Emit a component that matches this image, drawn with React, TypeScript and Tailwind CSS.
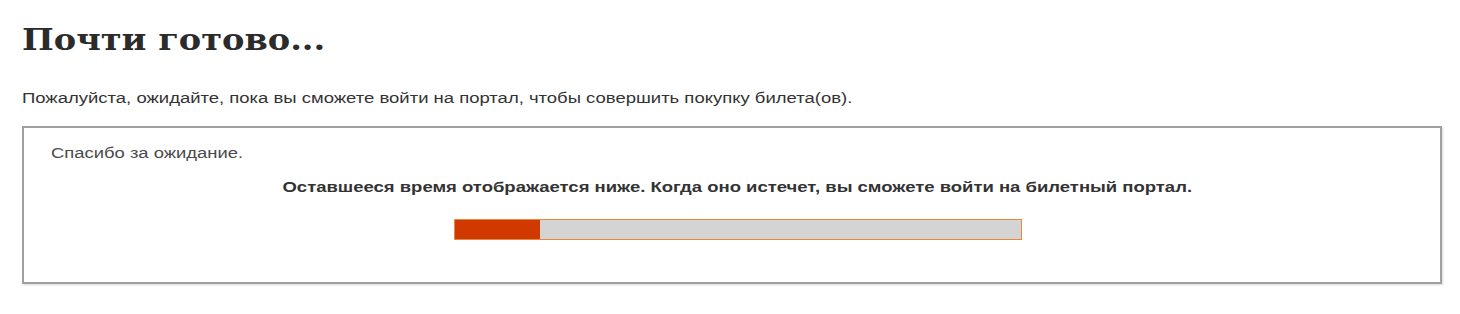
export default function App() {
  const progress = 15;
  return (
    <div className="w-[1460px] h-[314px] overflow-hidden bg-white pl-[22px] pr-[18px] pt-[18px] font-['Liberation_Sans',Arial,sans-serif] text-[#333]">
      <h1 className="font-['DejaVu_Serif',Georgia,serif] font-bold text-[30px] leading-[44px] text-[#2b2b2b] origin-left scale-x-[1.12]">
        Почти готово...
      </h1>
      <p className="mt-[27px] text-[14px] leading-[18px] text-[#333] origin-left scale-x-[1.32]">
        Пожалуйста, ожидайте, пока вы сможете войти на портал, чтобы совершить покупку билета(ов).
      </p>
      <div className="mt-[19px] w-[1420px] h-[158px] border-2 border-[#a0a0a0] shadow-[1px_1px_2px_rgba(0,0,0,0.15)] px-[27px] pt-[16px]">
        <p className="text-[14px] leading-[18px] text-[#4a4a4a] origin-left scale-x-[1.315]">Спасибо за ожидание.</p>
        <p className="mt-[16px] text-center text-[14px] leading-[18px] font-bold text-[#333] pl-[8px] scale-x-[1.32]">
          Оставшееся время отображается ниже. Когда оно истечет, вы сможете войти на билетный портал.
        </p>
        <div className="flex justify-center mt-[23px] pl-[12px]">
          <div className="w-[568px] h-[21px] border border-[#e8883a] bg-[#d4d4d4] flex">
            <div className="h-full bg-[#d03a00]" style={{ width: `${progress}%` }} />
          </div>
        </div>
      </div>
    </div>
  );
}
